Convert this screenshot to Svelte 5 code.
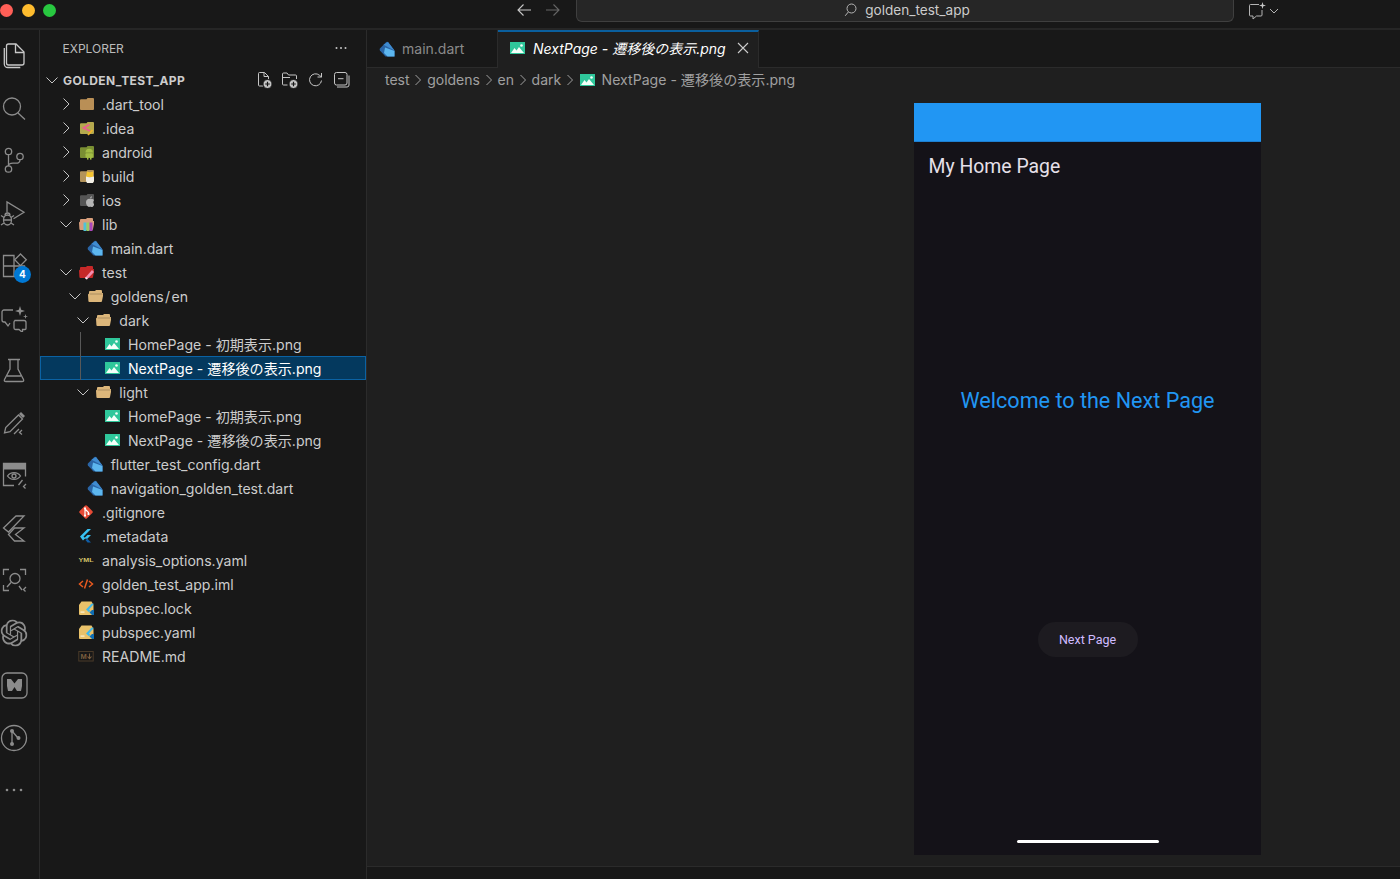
<script>
  const tree = [
    { name: '.dart_tool', depth: 1, chevron: 'right', icon: 'dartTool' },
    { name: '.idea', depth: 1, chevron: 'right', icon: 'idea' },
    { name: 'android', depth: 1, chevron: 'right', icon: 'android' },
    { name: 'build', depth: 1, chevron: 'right', icon: 'build' },
    { name: 'ios', depth: 1, chevron: 'right', icon: 'ios' },
    { name: 'lib', depth: 1, chevron: 'down', icon: 'lib' },
    { name: 'main.dart', depth: 2, icon: 'dart' },
    { name: 'test', depth: 1, chevron: 'down', icon: 'test' },
    { name: 'goldens\u200a/\u200aen', depth: 2, chevron: 'down', icon: 'open' },
    { name: 'dark', depth: 3, chevron: 'down', icon: 'open' },
    { name: 'HomePage - 初期表示.png', depth: 4, icon: 'image' },
    { name: 'NextPage - 遷移後の表示.png', depth: 4, icon: 'image', selected: true },
    { name: 'light', depth: 3, chevron: 'down', icon: 'open' },
    { name: 'HomePage - 初期表示.png', depth: 4, icon: 'image' },
    { name: 'NextPage - 遷移後の表示.png', depth: 4, icon: 'image' },
    { name: 'flutter_test_config.dart', depth: 2, icon: 'dart' },
    { name: 'navigation_golden_test.dart', depth: 2, icon: 'dart' },
    { name: '.gitignore', depth: 1, icon: 'git' },
    { name: '.metadata', depth: 1, icon: 'flutter' },
    { name: 'analysis_options.yaml', depth: 1, icon: 'yaml' },
    { name: 'golden_test_app.iml', depth: 1, icon: 'xml' },
    { name: 'pubspec.lock', depth: 1, icon: 'pubspec' },
    { name: 'pubspec.yaml', depth: 1, icon: 'pubspec' },
    { name: 'README.md', depth: 1, icon: 'markdown' }
  ];

  const crumbs = ['test', 'goldens', 'en', 'dark'];

  const indent = (depth) => 18 + (depth - 1) * 8.67;

  const closedFolder = 'M2 4.2a1 1 0 0 1 1-1h5.5l1-1.2H15a1 1 0 0 1 1 1V13a1 1 0 0 1-1 1H3a1 1 0 0 1-1-1z';
  const openFolder = 'M2 4a1 1 0 0 1 1-1h5l1-1h5a1 1 0 0 1 1 1v2h1.6L15 13a1 1 0 0 1-1 1H2.4a1 1 0 0 1-1-1L1 6.5 2 5.6z';
</script>

{#snippet fileIcon(kind)}
  <svg class="file-icon" viewBox="0 0 16 16" width="16" height="16">
    {#if kind === 'dartTool'}
      <path d={closedFolder} fill="#b98f56" />
    {:else if kind === 'idea'}
      <path d={closedFolder} fill="#b5a94e" />
      <path d="M11.500 4.500 5.500 8l6.500 3" fill="none" stroke="#ec5f8f" stroke-width="1.800" />
      <path d="M14.500 10l-4.500 5" fill="none" stroke="#f0b429" stroke-width="1.800" />
    {:else if kind === 'android'}
      <path d={closedFolder} fill="#7a8f33" />
      <path d="M7.500 8.500a3.700 3.700 0 0 1 7.400 0z" fill="#a2bd45" />
      <rect x="7.500" y="9.200" width="7.400" height="4.600" rx="1" fill="#a2bd45" />
      <rect x="9" y="13" width="1.500" height="2.600" fill="#a2bd45" />
      <rect x="12" y="13" width="1.500" height="2.600" fill="#a2bd45" />
    {:else if kind === 'build'}
      <path d={closedFolder} fill="#b3935a" />
      <path d="M9 3.500c1.500 1 4 1 6 0V9H8z" fill="#f4c430" />
      <path d="M8 8.600c2 1 5 1 8 0V13l-1 2H9l-1-2z" fill="#f2efe6" />
    {:else if kind === 'ios'}
      <path d={closedFolder} fill="#555555" />
      <path d="M12 7c2-.8 3.800.3 4 1.200-1.600 1-1.400 3.300.2 4-.6 1.600-1.500 3-2.700 2.800-1-.3-1.500-.3-2.400 0C9.800 15.200 8 12.600 8 10.300 8 7.600 10.500 6.300 12 7z" fill="#b4b4b4" />
      <path d="M12 6.500c0-1.300.8-2 2-2.300 0 1.300-.8 2.100-2 2.300z" fill="#b4b4b4" />
    {:else if kind === 'lib'}
      <path d={openFolder} fill="#d99f7c" />
      <rect x="5.500" y="6.500" width="3" height="8.500" fill="#4fc3d9" />
      <rect x="8.500" y="6.500" width="3" height="8.500" fill="#9ccc65" />
      <rect x="11.500" y="6.500" width="3" height="8.500" fill="#ab47bc" />
    {:else if kind === 'test'}
      <path d={openFolder} fill="#c62828" />
      <path d="M7 14l7-8 2 2-7 7.500z" fill="#f48fb1" />
      <path d="M7 14l1-1 1.500 1.500-1 1z" fill="#f4f4f4" />
    {:else if kind === 'open'}
      <path d={openFolder} fill="#dcb67a" />
      <path d="M2.800 6h12.800" stroke="#8f7650" stroke-width=".6" />
    {:else if kind === 'image'}
      <rect x="1" y="2" width="15" height="12" fill="#2fc79b" />
      <path d="M2 13l3.500-5 2 2.500 2.500-3.500 5 6z" fill="#f4fff9" />
      <circle cx="12.500" cy="5.500" r="1.300" fill="#f4fff9" />
    {:else if kind === 'dart'}
      <path d="M7.300.9.900 7.600q-.5.800 0 1.800L6.500 15.500h9V9.500L9 .9q-.8-.5-1.700 0z" fill="#2a65a6" />
      <path d="M4.500 3.800 9 1l6.500 8.500z" fill="#3f8bd0" />
      <path d="M6 6.500 15.500 10v5.500H8.500L5 12z" fill="#5cb6ef" />
    {:else if kind === 'git'}
      <rect x="2.800" y="2.800" width="10.400" height="10.400" rx="1.500" transform="rotate(45 8 8)" fill="#e64a35" />
      <path d="M7 3.500v9M7 5l3.500 3.500v2" stroke="#fff" stroke-width="1.200" fill="none" />
      <circle cx="7" cy="4.500" r="1.100" fill="#fff" />
      <circle cx="7" cy="11.500" r="1.100" fill="#fff" />
      <circle cx="10.500" cy="10" r="1.100" fill="#fff" />
    {:else if kind === 'flutter'}
      <path d="M2 8.500 9.500 1H13L5.500 8.500l1.800 1.800L5 12.500z" fill="#37c1f2" />
      <path d="M6 10.500 9.500 7H13L9.300 10.700z" fill="#37c1f2" />
      <path d="M7.500 12 9.300 10.700 13 14.500H9.500z" fill="#0f5ea8" />
    {:else if kind === 'yaml'}
      <text x="8" y="10.300" text-anchor="middle" textLength="15" lengthAdjust="spacingAndGlyphs" class="tiny yaml">YML</text>
    {:else if kind === 'xml'}
      <path d="M5 5 1.500 8 5 11M11 5l3.500 3L11 11M9.500 3.500l-3 9" fill="none" stroke="#e8591f" stroke-width="1.500" />
    {:else if kind === 'pubspec'}
      <path d="M1 5 3.500 1.500h10L15.500 5v9a1 1 0 0 1-1 1H2a1 1 0 0 1-1-1z" fill="#eac26a" />
      <rect x="2.500" y="11.500" width="4" height="1.200" fill="#fbf3d9" />
      <path d="M8 9.500 13.500 3.800H16L11 9.500l1.300 1.300-1.300 1.500z" fill="#3bb8ee" />
      <path d="M11.500 12.500l2.500-2.500H16v5h-2z" fill="#0f6db3" />
    {:else if kind === 'markdown'}
      <rect x="0.800" y="3.500" width="14.400" height="9.500" fill="none" stroke="#4a3a28" stroke-width="1" />
      <text x="5.500" y="10.800" text-anchor="middle" class="tiny md">M</text>
      <path d="M11.500 5.500v5M9.500 8.500l2 2.200 2-2.200" fill="none" stroke="#7a5e3e" stroke-width="1.100" />
    {/if}
  </svg>
{/snippet}

{#snippet chevron(direction)}
  <svg class="chevron" viewBox="0 0 16 16" width="16" height="16">
    {#if direction === 'right'}
      <path d="M5.500 2.500 11 8l-5.500 5.500" />
    {:else if direction === 'down'}
      <path d="M2.500 5.500 8 11l5.500-5.500" />
    {/if}
  </svg>
{/snippet}

<div class="window">
  <header class="titlebar">
    <div class="lights">
      <span class="light red"></span>
      <span class="light yellow"></span>
      <span class="light green"></span>
    </div>
    <div class="nav">
      <svg viewBox="0 0 16 16" width="16" height="16" class="arrow"><path d="M15 8H2M7.500 2.500 2 8l5.500 5.500" /></svg>
      <svg viewBox="0 0 16 16" width="16" height="16" class="arrow off"><path d="M1 8h13M8.500 2.500 14 8l-5.500 5.500" /></svg>
    </div>
    <div class="command">
      <svg viewBox="0 0 14 14" width="14" height="14" class="arrow thin"><circle cx="7.500" cy="5.500" r="4.500" /><path d="M4.300 9 1.200 12.800" /></svg>
      <span>golden_test_app</span>
    </div>
    <div class="chat">
      <svg viewBox="0 0 20 20" width="20" height="20" class="arrow thin">
        <path d="M12 3.500H3.500a1 1 0 0 0-1 1V14a1 1 0 0 0 1 1H6v3l3.500-3H14a1 1 0 0 0 1-1V9" />
        <path d="M15.500 1l.8 2.700 2.700.8-2.700.8-.8 2.700-.8-2.700-2.700-.8 2.700-.8z" class="solid" />
      </svg>
      <svg viewBox="0 0 10 10" width="10" height="10" class="arrow thin"><path d="M1 3l4 4 4-4" /></svg>
    </div>
  </header>

  <div class="body">
    <nav class="activity">
      <div class="act">
        <svg viewBox="0 0 28 28" class="act-icon active">
          <path d="M8.500 3h7.500l8 8v11a2 2 0 0 1-2 2H8.500a2 2 0 0 1-2-2V5a2 2 0 0 1 2-2z" />
          <path d="M15.500 3v8.500H24" />
          <path d="M4.300 7v16a3.500 3.500 0 0 0 3.500 3.500h12.500" />
        </svg>
      </div>
      <div class="act">
        <svg viewBox="0 0 28 28" class="act-icon">
          <circle cx="12" cy="12.500" r="8.500" />
          <path d="M18 19l7 6.500" />
        </svg>
      </div>
      <div class="act">
        <svg viewBox="0 0 28 28" class="act-icon">
          <circle cx="8.500" cy="5.500" r="3.200" />
          <circle cx="20" cy="10.500" r="3.200" />
          <circle cx="8.500" cy="23" r="3.200" />
          <path d="M8.500 8.700v11M20 13.700c0 3-1.500 3.500-4 3.500h-3c-3 0-4.500 1-4.500 3" />
        </svg>
      </div>
      <div class="act">
        <svg viewBox="0 0 28 28" class="act-icon">
          <path d="M7 13.500V3l17 10.300-10.500 6.500" />
          <ellipse cx="7.500" cy="21" rx="4" ry="5" />
          <path d="M3.500 21h8M1 16.500l3 2M14 16.500l-3 2M1 26l3-2M14 26l-3-2M5 16.500a2.500 2.500 0 0 1 5 0" />
        </svg>
      </div>
      <div class="act">
        <svg viewBox="0 0 28 28" class="act-icon">
          <path d="M3.500 4.500h10.500v21H3.500zM3.500 15H24.500v4M14 25.500h8" />
          <path d="M20.500 3l5.800 5.800-5.800 5.800-5.800-5.800z" />
        </svg>
        <span class="badge">4</span>
      </div>
      <div class="act">
        <svg viewBox="0 0 28 28" class="act-icon">
          <path d="M13 6H4a2 2 0 0 0-2 2v8a2 2 0 0 0 2 2h1l3 4 2-3" />
          <path d="M14.500 16.500H24a2 2 0 0 1 2 2v6a1 1 0 0 1-1 1h-2.500v3l-3.500-3h-3.500a1.500 1.500 0 0 1-1.500-1.500v-6a2 2 0 0 1 1-1.500z" />
          <path d="M20 2l1.200 3.800L25 7l-3.800 1.200L20 12l-1.200-3.800L15 7l3.800-1.200zM25.500 10l.6 1.900 1.900.6-1.900.6-.6 1.900-.6-1.900-1.900-.6 1.900-.6z" class="solid" />
        </svg>
      </div>
      <div class="act">
        <svg viewBox="0 0 28 28" class="act-icon">
          <path d="M8 3.500h12M10 3.500v9.500L4.500 23.500q-.8 2 1.500 2h16q2.300 0 1.500-2L18 13V3.500M7 20h14" />
        </svg>
      </div>
      <div class="act">
        <svg viewBox="0 0 28 28" class="act-icon">
          <path d="M4.500 24l1.200-5.500L18.500 6l4 4L10 22.700z" />
          <path d="M19 5l2-2 4 4-2 2z" class="solid" />
          <path d="M14 25l5-5M22 21l-2.500 2.500 2.500 2" />
        </svg>
      </div>
      <div class="act">
        <svg viewBox="0 0 28 28" class="act-icon">
          <path d="M14 24.500H3.500v-22h22v13" />
          <rect x="3.500" y="2.500" width="22" height="6" class="solid" />
          <path d="M7.500 15c3-4.500 10-4.500 13 0-3 4.500-10 4.500-13 0z" />
          <circle cx="14" cy="15" r="2" />
          <path d="M18.500 24l4-5M26 23l-2.500 2.500 2 2" />
        </svg>
      </div>
      <div class="act">
        <svg viewBox="0 0 28 28" class="act-icon">
          <path d="M3.500 14 16 2h8L8.500 18z" />
          <path d="M14.500 14H24l-8.500 6.500L24 27h-9.500L8.500 20.500z" />
        </svg>
      </div>
      <div class="act">
        <svg viewBox="0 0 28 28" class="act-icon">
          <path d="M3.500 9V3.500H9M20 3.500h5.500V9M3.500 19v5.500H9" />
          <circle cx="15" cy="12.500" r="5" />
          <path d="M11 16.500l-4 4.500M19 20l3 4M26 21l-2.500 2.500 2 2" />
        </svg>
      </div>
      <div class="act">
        <svg viewBox="0 0 24 24" class="act-icon fill">
          <path d="M22.2819 9.8211a5.9847 5.9847 0 0 0-.5157-4.9108 6.0462 6.0462 0 0 0-6.5098-2.9A6.0651 6.0651 0 0 0 4.9807 4.1818a5.9847 5.9847 0 0 0-3.9977 2.9 6.0462 6.0462 0 0 0 .7427 7.0966 5.98 5.98 0 0 0 .511 4.9107 6.051 6.051 0 0 0 6.5146 2.9001A5.9847 5.9847 0 0 0 13.2599 24a6.0557 6.0557 0 0 0 5.7718-4.2058 5.9894 5.9894 0 0 0 3.9977-2.9001 6.0557 6.0557 0 0 0-.7475-7.0729zm-9.022 12.6081a4.4755 4.4755 0 0 1-2.8764-1.0408l.1419-.0804 4.7783-2.7582a.7948.7948 0 0 0 .3927-.6813v-6.7369l2.02 1.1686a.071.071 0 0 1 .038.052v5.5826a4.504 4.504 0 0 1-4.4945 4.4944zm-9.6607-4.1254a4.4708 4.4708 0 0 1-.5346-3.0137l.142.0852 4.783 2.7582a.7712.7712 0 0 0 .7806 0l5.8428-3.3685v2.3324a.0804.0804 0 0 1-.0332.0615L9.74 19.9502a4.4992 4.4992 0 0 1-6.1408-1.6464zM2.3408 7.8956a4.485 4.485 0 0 1 2.3655-1.9728V11.6a.7664.7664 0 0 0 .3879.6765l5.8144 3.3543-2.0201 1.1685a.0757.0757 0 0 1-.071 0l-4.8303-2.7865A4.504 4.504 0 0 1 2.3408 7.872zm16.5963 3.8558L13.1038 8.364 15.1192 7.2a.0757.0757 0 0 1 .071 0l4.8303 2.7913a4.4944 4.4944 0 0 1-.6765 8.1042v-5.6772a.79.79 0 0 0-.407-.667zm2.0107-3.0231l-.142-.0852-4.7735-2.7818a.7759.7759 0 0 0-.7854 0L9.409 9.2297V6.8974a.0662.0662 0 0 1 .0284-.0615l4.8303-2.7866a4.4992 4.4992 0 0 1 6.6802 4.66zM8.3065 12.863l-2.02-1.1638a.0804.0804 0 0 1-.038-.0567V6.0742a4.4992 4.4992 0 0 1 7.3757-3.4537l-.142.0805L8.704 5.459a.7948.7948 0 0 0-.3927.6813zm1.0976-2.3654l2.602-1.4998 2.6069 1.4998v2.9994l-2.5974 1.4997-2.6067-1.4997Z" />
        </svg>
      </div>
      <div class="act">
        <svg viewBox="0 0 28 28" class="act-icon">
          <rect x="2" y="2" width="25" height="25" rx="5" />
          <path d="M7 8h4l3.500 4.500L18 8h4v7l-1 5h-4l-2.500-4-2.500 4H8l-1-5z" class="solid" />
        </svg>
      </div>
      <div class="act">
        <svg viewBox="0 0 28 28" class="act-icon">
          <circle cx="14" cy="14" r="12.500" />
          <path d="M12 7v13M12 7l6 7" />
          <circle cx="12" cy="7" r="2" class="solid" />
          <circle cx="18.500" cy="14" r="2" class="solid" />
          <circle cx="12" cy="20" r="2" class="solid" />
        </svg>
      </div>
      <div class="act">
        <svg viewBox="0 0 28 28" class="act-icon">
          <circle cx="7" cy="14" r="1.300" class="solid" />
          <circle cx="14" cy="14" r="1.300" class="solid" />
          <circle cx="21" cy="14" r="1.300" class="solid" />
        </svg>
      </div>
    </nav>

    <aside class="sidebar">
      <div class="side-head">
        <span>EXPLORER</span>
        <svg viewBox="0 0 16 16" width="16" height="16" class="more">
          <circle cx="3.500" cy="8" r="1" /><circle cx="8" cy="8" r="1" /><circle cx="12.500" cy="8" r="1" />
        </svg>
      </div>
      <div class="root-row">
        {@render chevron('down')}
        <span class="root-name">GOLDEN_TEST_APP</span>
        <div class="actions">
          <svg viewBox="0 0 18 18" width="18" height="18">
            <path d="M8 15H4.500a1 1 0 0 1-1-1V2.500a1 1 0 0 1 1-1h5l4 4v3M9 1.500v4h4.500" />
            <circle cx="12.500" cy="13" r="4.500" class="disc" />
            <path d="M12.500 10.700v4.600M10.200 13h4.600" class="cut" />
          </svg>
          <svg viewBox="0 0 18 18" width="18" height="18">
            <path d="M6.500 14H2.500a1 1 0 0 1-1-1V3a1 1 0 0 1 1-1h3.500l1.500 2h7a1 1 0 0 1 1 1v3M1.500 6.500H9" />
            <circle cx="12.500" cy="13" r="4.500" class="disc" />
            <path d="M12.500 10.700v4.600M10.200 13h4.600" class="cut" />
          </svg>
          <svg viewBox="0 0 18 18" width="18" height="18">
            <path d="M14.500 9.500a6 6 0 1 1-2-5.200L14.500 6M14.500 2v4h-4" />
          </svg>
          <svg viewBox="0 0 18 18" width="18" height="18">
            <rect x="1.500" y="1.500" width="12.500" height="12.500" rx="2" />
            <path d="M5 7.700h5.500M16 4.500v9.500a2 2 0 0 1-2 2H4" />
          </svg>
        </div>
      </div>
      <div class="tree">
        {#each tree as item}
          <div class="row" class:selected={item.selected} style="padding-left: {indent(item.depth)}px">
            {@render chevron(item.chevron)}
            {@render fileIcon(item.icon)}
            <span class="label">{item.name}</span>
          </div>
        {/each}
        <span class="guide"></span>
      </div>
    </aside>

    <main class="editor">
      <div class="tabs">
        <div class="tab">
          {@render fileIcon('dart')}
          <span>main.dart</span>
        </div>
        <div class="tab current">
          {@render fileIcon('image')}
          <span>NextPage - 遷移後の表示.png</span>
          <svg viewBox="0 0 12 12" width="12" height="12" class="close"><path d="M1 1l10 10M11 1 1 11" /></svg>
        </div>
      </div>
      <div class="crumbs">
        {#each crumbs as crumb}
          <span>{crumb}</span>
          <svg viewBox="0 0 8 12" width="8" height="12" class="sep"><path d="M1.500 1 6.500 6l-5 5" /></svg>
        {/each}
        {@render fileIcon('image')}
        <span class="crumb-file">NextPage - 遷移後の表示.png</span>
      </div>
      <div class="preview">
        <div class="phone">
          <div class="status"></div>
          <div class="page-title">My Home Page</div>
          <div class="welcome">Welcome to the Next Page</div>
          <div class="next-btn">Next Page</div>
          <div class="home-bar"></div>
        </div>
      </div>
      <footer class="statusbar"></footer>
    </main>
  </div>
</div>

<style>
  :global(body) {
    margin: 0;
    background: #181818;
  }

  .window {
    width: 1400px;
    height: 879px;
    display: flex;
    flex-direction: column;
    overflow: hidden;
    background: #181818;
    color: #cccccc;
    font-family: Inter, "Noto Sans CJK JP", sans-serif;
    font-size: 14px;
  }

  .titlebar {
    flex: none;
    height: 28px;
    display: flex;
    align-items: flex-start;
    border-bottom: 2px solid #262626;
    background: #181818;
  }

  .lights {
    display: flex;
    gap: 8.700px;
    width: 516px;
    padding-top: 3.500px;
  }

  .light {
    width: 13px;
    height: 13px;
    border-radius: 50%;
  }

  .red { background: #ff5f57; }
  .yellow { background: #febc2e; }
  .green { background: #28c840; }

  .nav {
    display: flex;
    gap: 13px;
    width: 60px;
    padding-top: 2px;
  }

  .arrow {
    fill: none;
    stroke: #c8c8c8;
    stroke-width: 1.100;
  }

  .arrow.off {
    stroke: #666666;
  }

  .arrow.thin {
    stroke: #b4b4b4;
    stroke-width: 1;
  }

  .arrow .solid {
    fill: #c8c8c8;
    stroke: none;
  }

  .command {
    box-sizing: border-box;
    width: 658px;
    height: 22px;
    display: flex;
    align-items: center;
    justify-content: center;
    gap: 7px;
    padding: 0 0 2px 4px;
    border: 1px solid #3f3f3f;
    border-top: none;
    border-radius: 0 0 6px 6px;
    background: #262626;
    color: #cccccc;
    font-size: 13.600px;
  }

  .chat {
    display: flex;
    align-items: center;
    gap: 2px;
    margin-left: 13px;
    padding-top: 1px;
  }

  .body {
    flex: 1;
    min-height: 0;
    display: flex;
  }

  .activity {
    box-sizing: border-box;
    flex: none;
    width: 40px;
    display: flex;
    flex-direction: column;
    border-right: 1px solid #2b2b2b;
  }

  .act {
    position: relative;
    flex: none;
    height: 52.500px;
    display: flex;
    align-items: center;
    top: -1px;
  }

  .act-icon {
    width: 28px;
    height: 28px;
    fill: none;
    stroke: #8c8c8c;
    stroke-width: 1.300;
  }

  .act-icon.active {
    stroke: #c8c8c8;
  }

  .act-icon.fill {
    fill: #8c8c8c;
    stroke: none;
    transform: scale(0.96);
  }

  .act-icon .solid {
    fill: #8c8c8c;
    stroke: none;
  }

  .badge {
    position: absolute;
    left: 14px;
    top: 27px;
    width: 17px;
    height: 17px;
    border-radius: 50%;
    background: #0078d4;
    color: #ffffff;
    font-size: 10px;
    font-weight: 700;
    line-height: 17px;
    text-align: center;
  }

  .sidebar {
    box-sizing: border-box;
    flex: none;
    width: 327px;
    border-right: 1px solid #2b2b2b;
    display: flex;
    flex-direction: column;
  }

  .side-head {
    height: 38px;
    flex: none;
    display: flex;
    align-items: center;
    justify-content: space-between;
    padding: 0 17px 2px 22.500px;
    box-sizing: border-box;
    font-size: 12px;
    color: #bbbbbb;
  }

  .more {
    fill: #c5c5c5;
  }

  .root-row {
    height: 24px;
    flex: none;
    display: flex;
    align-items: center;
    padding-left: 4px;
  }

  .root-name {
    margin-left: 3px;
    font-size: 12px;
    letter-spacing: .4px;
    font-weight: 700;
    color: #cccccc;
  }

  .actions {
    margin-left: auto;
    display: flex;
    gap: 8px;
    padding-right: 15px;
  }

  .actions svg {
    fill: none;
    stroke: #c5c5c5;
    stroke-width: 1;
  }

  .actions .disc {
    fill: #c5c5c5;
    stroke: #181818;
    stroke-width: 1;
  }

  .actions .cut {
    stroke: #181818;
    stroke-width: 1.200;
  }

  .tree {
    position: relative;
    font-size: 14.100px;
  }

  .row {
    box-sizing: border-box;
    height: 24px;
    display: flex;
    align-items: center;
    border: 1px solid transparent;
    border-width: 1px 0;
    white-space: nowrap;
  }

  .row.selected {
    background: #04395e;
    outline: 1px solid #0b62a3;
    outline-offset: -1px;
    color: #ffffff;
  }

  .chevron {
    flex: none;
    fill: none;
    stroke: #c5c5c5;
    stroke-width: 1;
  }

  .file-icon {
    flex: none;
  }

  .row .file-icon {
    margin-left: 4px;
  }

  .label {
    margin-left: 8px;
  }

  .guide {
    position: absolute;
    left: 40px;
    top: 240px;
    width: 1px;
    height: 48px;
    background: #585858;
  }

  .tiny {
    font-family: "Liberation Sans", sans-serif;
    font-weight: 700;
  }

  .yaml {
    font-size: 6px;
    fill: #d6c46a;
  }

  .md {
    font-size: 7.500px;
    fill: #7a5e3e;
  }

  .editor {
    flex: 1;
    min-width: 0;
    display: flex;
    flex-direction: column;
    background: #1f1f1f;
  }

  .tabs {
    flex: none;
    height: 38px;
    display: flex;
    box-sizing: border-box;
    border-bottom: 1px solid #2b2b2b;
    background: #181818;
  }

  .tab {
    box-sizing: border-box;
    width: 131px;
    height: 37px;
    display: flex;
    align-items: center;
    gap: 7px;
    padding-left: 12px;
    border-right: 1px solid #2b2b2b;
    color: #8a8a8a;
  }

  .tab.current {
    width: 261px;
    height: 38px;
    border-top: 2px solid #0a5f9e;
    background: #1f1f1f;
    color: #ffffff;
    font-style: italic;
    gap: 8px;
    padding: 0 0 5px 11px;
  }

  .close {
    margin-left: 3px;
    fill: none;
    stroke: #cccccc;
    stroke-width: 1.100;
  }

  .crumbs {
    flex: none;
    height: 23px;
    display: flex;
    align-items: center;
    gap: 4.800px;
    padding-left: 18px;
    color: #a0a0a0;
  }

  .sep {
    fill: none;
    stroke: #a0a0a0;
    stroke-width: 1;
  }

  .crumb-file {
    margin: -2px 0 0 2px;
    font-size: 14.100px;
  }

  .preview {
    flex: 1;
    min-height: 0;
    box-sizing: border-box;
    padding: 12px 0 11px 547px;
  }

  .phone {
    width: 347px;
    height: 752px;
    display: flex;
    flex-direction: column;
    align-items: center;
    background: #141218;
    font-family: Roboto, sans-serif;
  }

  .status {
    flex: none;
    width: 100%;
    height: 39px;
    box-sizing: border-box;
    border-bottom: 1px solid #1e7fd0;
    background: #2196f3;
  }

  .page-title {
    align-self: flex-start;
    margin: 12px 0 0 14.500px;
    font-size: 19.400px;
    line-height: 26px;
    color: #e6e0e9;
  }

  .welcome {
    margin-top: 206px;
    font-size: 21.600px;
    line-height: 30px;
    color: #2196f3;
  }

  .next-btn {
    margin-top: 206px;
    width: 100px;
    height: 35px;
    border-radius: 18px;
    background: #1d1b20;
    color: #d0bcff;
    font-size: 12.500px;
    font-weight: 400;
    line-height: 35px;
    text-align: center;
  }

  .home-bar {
    margin-top: 183px;
    width: 142px;
    height: 3px;
    border-radius: 2px;
    background: #ffffff;
  }

  .statusbar {
    flex: none;
    height: 12px;
    border-top: 1px solid #2b2b2b;
    background: #181818;
  }
</style>
